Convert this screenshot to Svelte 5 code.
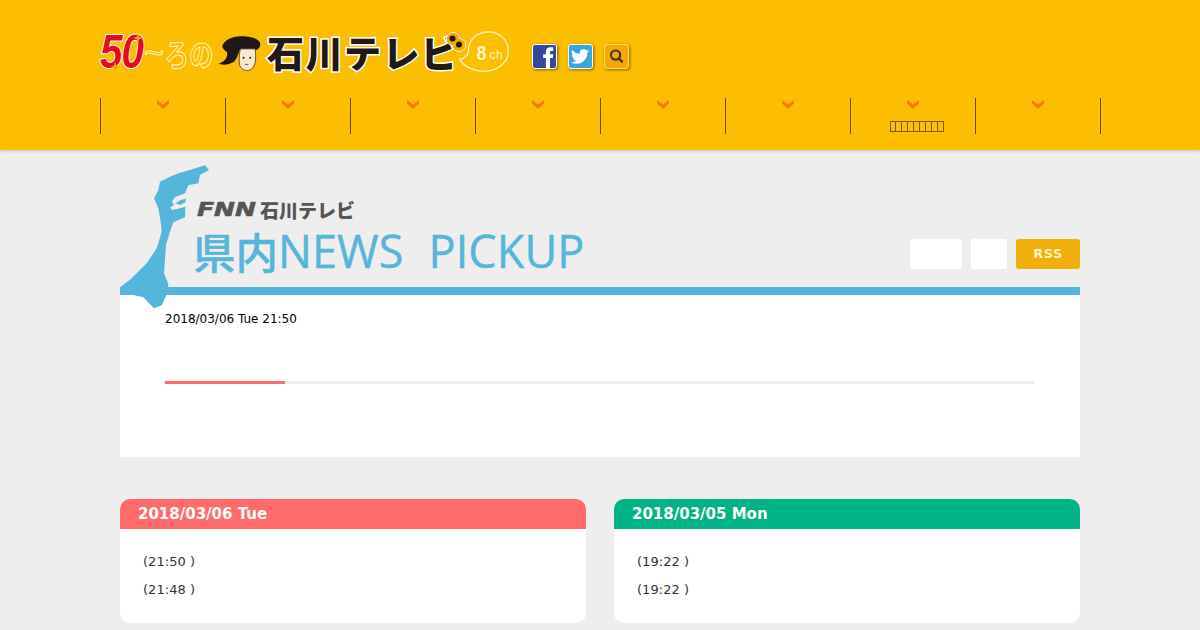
<script>
  const navItems = [0, 1, 2, 3, 4, 5, 6, 7];
  const tofu = Array(9).fill(0);
  const cards = [
    { date: '2018/03/06 Tue', cls: 'red', times: ['(21:50 )', '(21:48 )'] },
    { date: '2018/03/05 Mon', cls: 'green', times: ['(19:22 )', '(19:22 )'] }
  ];
</script>

<header class="header">
  <div class="logo-row">
    <div class="logo">
      <span class="l50">50</span>
      <span class="ltilde">~</span>
      <span class="lro">ろの</span>
      <svg class="face" viewBox="380 40 135 115" aria-hidden="true">
        <path d="M395 78C400 58 425 48 450 47C475 45 505 52 510 68C512 80 502 90 495 88L448 88C445 100 440 115 430 125C415 133 400 135 385 130C405 122 412 110 410 95C405 90 398 88 395 78z" fill="#231815"/>
        <path d="M450 85L495 85C498 110 497 135 485 145C475 155 455 152 448 135C445 120 447 100 450 85z" fill="#f7e8d0" stroke="#231815" stroke-width="2"/>
        <circle cx="460" cy="112" r="3" fill="#231815"/>
        <circle cx="480" cy="112" r="3" fill="#231815"/>
        <path d="M464 132h10" stroke="#c0392b" stroke-width="3"/>
      </svg>
      <span class="lname">石川テレビ</span>
      <svg class="bubble" viewBox="230 30 160 130" aria-hidden="true">
        <path d="M325 36C360 36 385 60 385 95C385 130 350 155 310 155C280 155 250 140 238 118C250 118 262 108 265 95C262 60 290 36 325 36z" fill="none" stroke="#fff6c8" stroke-width="4"/>
        <text x="289" y="120" class="b8" textLength="30" lengthAdjust="spacingAndGlyphs">8</text>
        <text x="328" y="118" class="bch">ch</text>
      </svg>
      <svg class="dak" viewBox="0 0 22 22" aria-hidden="true">
        <circle cx="8" cy="8" r="6.500" fill="#f5a800" stroke="#fff" stroke-width="1"/>
        <circle cx="14" cy="14" r="6.500" fill="#f5a800" stroke="#fff" stroke-width="1"/>
        <circle cx="14" cy="14" r="6" fill="#f5a800"/>
        <circle cx="8" cy="8" r="6" fill="#f5a800"/>
        <circle cx="7.500" cy="7.500" r="3" fill="#231815"/>
        <circle cx="14" cy="13.500" r="3" fill="#231815"/>
      </svg>
      <svg class="spark s1" viewBox="0 0 10 10" aria-hidden="true"><path d="M5 0l1.200 3.800L10 5 6.200 6.200 5 10 3.800 6.200 0 5l3.800-1.200z" fill="#f7a30c"/></svg>
      <svg class="spark s2" viewBox="0 0 10 10" aria-hidden="true"><path d="M5 0l1.200 3.800L10 5 6.200 6.200 5 10 3.800 6.200 0 5l3.800-1.200z" fill="#f7a30c"/></svg>
    </div>
    <div class="icons">
      <span class="icon fb">
        <svg viewBox="0 0 25 25" aria-hidden="true"><path d="M14 25V14h-3v-4h3V7.500C14 4 16 2.500 19 2.500h3v4h-2c-1 0-1.500.5-1.500 1.500v2H22l-.5 4h-3v11z" fill="#fff"/></svg>
      </span>
      <span class="icon tw">
        <svg viewBox="0 0 25 25" aria-hidden="true"><path d="M22 6.500c-.8.400-1.600.6-2.400.7.900-.5 1.500-1.300 1.800-2.300-.8.500-1.700.8-2.600 1a4 4 0 0 0-6.900 3.700C8.500 9.400 5.500 7.900 3.500 5.400c-1.100 1.900-.5 4.200 1.200 5.400-.7 0-1.300-.2-1.800-.5 0 2 1.400 3.700 3.300 4.100-.6.100-1.200.2-1.800 0 .5 1.600 2 2.800 3.800 2.800A8.100 8.100 0 0 1 2 18.400 11.500 11.500 0 0 0 19.900 8.500c.9-.5 1.500-1.200 2.100-2z" fill="#fff"/></svg>
      </span>
      <span class="icon se">
        <svg viewBox="0 0 25 25" aria-hidden="true"><circle cx="11.500" cy="11" r="5" fill="none" stroke="#4a3a12" stroke-width="2.400"/><path d="M15 14.500l3.500 3.500" stroke="#4a3a12" stroke-width="2.600" stroke-linecap="round"/></svg>
      </span>
    </div>
  </div>
  <nav class="nav">
    {#each navItems as n}
      <div class="nav-item">
        <svg class="chev" viewBox="0 0 12 9" aria-hidden="true"><path d="M0 0L6 4.500 12 0V3.500L6 9 0 3.500z" fill="#f47a12"/></svg>
        {#if n === 6}
          <span class="tofu">{#each tofu as t}<i></i>{/each}</span>
        {/if}
      </div>
    {/each}
  </nav>
</header>

<main class="main">
  <svg class="map" viewBox="0 0 780 480" aria-hidden="true">
    <path d="M297 30 285 16 265 22 240 30 205 40 180 50 150 65 145 90 132 115 145 145 152 185 155 215 148 240 140 265 110 310 62 358 32 380 30 402 70 405 100 412 132 445 155 436 172 400 175 372 162 340 165 300 168 255 180 215 190 187 225 172 226 140 205 146 186 150 180 142 192 136 186 124 195 112 225 100 235 76 265 70 270 45z" fill="#54b6da"/>
    <path d="M196 130 212 120 228 116 226 127 210 135z" fill="#54b6da"/>
  </svg>
  <div class="title-row">
    <div class="title">
      <div class="fnn"><b>FNN</b><span>石川テレビ</span></div>
      <h1><span class="kanji">県内</span>NEWS<span class="sp"></span>PICKUP</h1>
    </div>
    <div class="buttons">
      <span class="btn w1"></span>
      <span class="btn w2"></span>
      <span class="btn rss">RSS</span>
    </div>
  </div>
  <section class="panel">
    <p class="stamp">2018/03/06 Tue 21:50</p>
    <div class="progress"><div class="progress-bar"></div></div>
  </section>
  <div class="cards">
    {#each cards as c}
      <article class="card">
        <h2 class={c.cls}>{c.date}</h2>
        <ul>
          {#each c.times as t}<li>{t}</li>{/each}
        </ul>
      </article>
    {/each}
  </div>
</main>

<style>
  :global(body) {
    margin: 0;
    background: #eeeeee;
    font-family: "DejaVu Sans", sans-serif;
    overflow: hidden;
  }
  .header {
    height: 150px;
    box-sizing: border-box;
    background: #fbbe00;
    padding: 30px 100px 0;
    box-shadow: 0 1px 3px rgba(0, 0, 0, 0.2);
    position: relative;
  }
  .logo-row {
    display: flex;
    height: 44px;
    align-items: center;
  }
  .logo {
    width: 432px;
    height: 44px;
    position: relative;
    display: flex;
    align-items: center;
    font-family: "Noto Sans CJK JP", sans-serif;
  }
  .l50 {
    font-family: "Liberation Sans", sans-serif;
    font-weight: 700;
    font-style: italic;
    font-size: 48px;
    line-height: 44px;
    letter-spacing: -1px;
    color: #e60b1c;
    -webkit-text-stroke: 2px #fff;
    paint-order: stroke fill;
    width: 44px;
    flex: none;
    display: block;
    transform: scaleX(0.84);
    transform-origin: left center;
  }
  .spark {
    position: absolute;
    width: 10px;
    height: 10px;
  }
  .s1 {
    left: 33px;
    top: 3px;
  }
  .s2 {
    left: 10px;
    top: 32px;
  }
  .ltilde {
    font-family: "Liberation Sans", sans-serif;
    font-size: 34px;
    line-height: 44px;
    color: #fbbe00;
    -webkit-text-stroke: 1px #fff3c0;
    width: 21px;
    flex: none;
  }
  .lro {
    font-size: 31px;
    line-height: 1;
    font-weight: 700;
    color: #fbbe00;
    -webkit-text-stroke: 1px #fff6c8;
    width: 52px;
    flex: none;
    white-space: nowrap;
    display: block;
    transform: scaleX(0.78);
    transform-origin: left center;
  }
  .face {
    width: 45px;
    height: 38px;
    flex: none;
    margin-bottom: -2px;
  }
  .lname {
    font-size: 37px;
    font-weight: 900;
    line-height: 1;
    margin-left: 5px;
    letter-spacing: 1.500px;
    color: #231815;
    -webkit-text-stroke: 3px #fff;
    paint-order: stroke fill;
    white-space: nowrap;
  }
  .bubble {
    position: absolute;
    left: 357px;
    top: 0;
    width: 53px;
    height: 43px;
  }
  .dak {
    position: absolute;
    left: 345px;
    top: 1px;
    width: 22px;
    height: 22px;
  }
  .b8 {
    font-family: "Liberation Sans", sans-serif;
    font-size: 62px;
    font-weight: 700;
    fill: #fff6c8;
  }
  .bch {
    font-family: "Liberation Sans", sans-serif;
    font-size: 36px;
    font-weight: 400;
    letter-spacing: 2px;
    fill: #fff6c8;
  }
  .icons {
    display: flex;
    gap: 11px;
    padding-top: 8px;
  }
  .icon {
    width: 25px;
    height: 25px;
    box-sizing: border-box;
    border-radius: 3px;
    box-shadow: 1px 1px 3px rgba(0, 0, 0, 0.45);
    overflow: hidden;
    display: block;
  }
  .icon svg {
    display: block;
    width: 100%;
    height: 100%;
  }
  .fb {
    background: #33479b;
    border: 1px solid #fff;
  }
  .tw {
    background: #36a5e0;
    border: 1px solid #fff;
  }
  .se {
    background: #f4a90a;
    border: 1px solid #ffdf5a;
  }
  .nav {
    display: flex;
    margin-top: 24px;
    border-right: 1px solid #6b4a10;
    box-sizing: border-box;
    width: 1001px;
  }
  .nav-item {
    width: 125px;
    height: 36px;
    box-sizing: border-box;
    border-left: 1px solid #6b4a10;
    display: flex;
    flex-direction: column;
    align-items: center;
    padding-right: 1px;
  }
  .chev {
    width: 12px;
    height: 9px;
    display: block;
    flex: none;
    margin-top: 2px;
  }
  .tofu {
    display: flex;
    margin-top: 12px;
    margin-left: 8px;
  }
  .tofu i {
    display: block;
    width: 6px;
    height: 11px;
    box-sizing: border-box;
    border: 1px solid #7a5a18;
    border-left: 0;
  }
  .tofu i:first-child {
    border-left: 1px solid #7a5a18;
  }
  .main {
    width: 960px;
    margin: 0 auto;
    position: relative;
  }
  .map {
    position: absolute;
    left: -10px;
    top: 10px;
    width: 260px;
    height: 160px;
    z-index: 2;
  }
  .title-row {
    height: 137px;
    display: flex;
    justify-content: space-between;
    align-items: flex-end;
    border-bottom: 8px solid #54b6da;
  }
  .title {
    padding-left: 73px;
    padding-bottom: 13px;
  }
  .fnn {
    display: flex;
    align-items: center;
    height: 20px;
    color: #555;
    margin-left: 4px;
  }
  .fnn b {
    font-family: "DejaVu Sans", sans-serif;
    font-style: italic;
    font-size: 20px;
    font-weight: 700;
    -webkit-text-stroke: 0.6px #555;
    width: 63px;
    flex: none;
    display: block;
    transform: scaleX(1.25);
    transform-origin: left center;
  }
  .fnn span {
    font-family: "Noto Sans CJK JP", sans-serif;
    font-weight: 900;
    font-size: 19px;
    line-height: 1;
    white-space: nowrap;
  }
  h1 {
    margin: 9px 0 0;
    font-family: "Open Sans", sans-serif;
    font-size: 45px;
    line-height: 46px;
    font-weight: 500;
    letter-spacing: 0.100px;
    -webkit-text-stroke: 0.4px #54b6da;
    color: #54b6da;
    white-space: nowrap;
    display: flex;
  }
  .kanji {
    font-family: "Noto Sans CJK JP", sans-serif;
    font-size: 42.500px;
    font-weight: 500;
    letter-spacing: 0;
  }
  .sp {
    width: 25px;
  }
  .buttons {
    display: flex;
    gap: 9px;
    padding-bottom: 18px;
  }
  .btn {
    height: 30px;
    border-radius: 3px;
    background: #fff;
    display: block;
  }
  .w1 {
    width: 52px;
  }
  .w2 {
    width: 36px;
  }
  .rss {
    width: 64px;
    background: #f2ae0a;
    color: #fff3c0;
    font-size: 13px;
    font-weight: 700;
    letter-spacing: 0.5px;
    text-align: center;
    line-height: 30px;
  }
  .panel {
    background: #fff;
    height: 162px;
    box-sizing: border-box;
    padding: 16px 45px 0;
  }
  .stamp {
    margin: 0;
    font-size: 12px;
    line-height: 16px;
    color: #000;
  }
  .progress {
    margin-top: 54px;
    height: 3px;
    background: #eee;
  }
  .progress-bar {
    width: 120px;
    height: 3px;
    background: #ff6b6b;
  }
  .cards {
    display: flex;
    gap: 28px;
    margin-top: 42px;
  }
  .card {
    width: 466px;
    height: 124px;
    background: #fff;
    border-radius: 10px;
    overflow: hidden;
  }
  h2 {
    margin: 0;
    height: 30px;
    padding-left: 18px;
    font-size: 15px;
    line-height: 30px;
    font-weight: 700;
    color: #fff;
  }
  .red {
    background: #ff6b6b;
  }
  .green {
    background: #00b386;
  }
  ul {
    list-style: none;
    margin: 0;
    padding: 19px 23px 0;
  }
  li {
    font-size: 13px;
    line-height: 28px;
    letter-spacing: 0.05px;
    color: #333;
  }
</style>
